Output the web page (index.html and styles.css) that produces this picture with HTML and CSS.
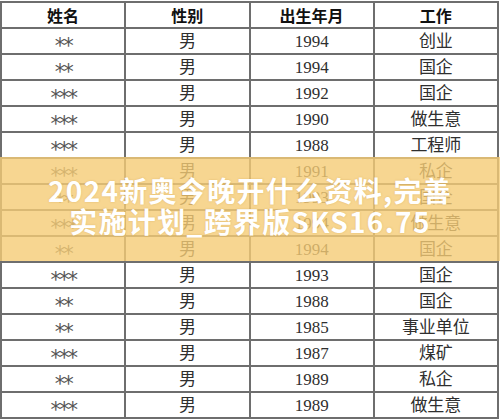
FILE: index.html
```html
<!DOCTYPE html>
<html lang="zh">
<head>
<meta charset="utf-8">
<link rel="stylesheet" href="styles.css">
</head>
<body>
<div class="page">
  <div class="sheet">
    <div class="cell head">姓名</div><div class="cell head">性别</div><div class="cell head">出生年月</div><div class="cell head">工作</div>
    <div class="cell name">**</div><div class="cell">男</div><div class="cell">1994</div><div class="cell">创业</div>
    <div class="cell name">**</div><div class="cell">男</div><div class="cell">1994</div><div class="cell">国企</div>
    <div class="cell name">***</div><div class="cell">男</div><div class="cell">1992</div><div class="cell">国企</div>
    <div class="cell name">***</div><div class="cell">男</div><div class="cell">1990</div><div class="cell">做生意</div>
    <div class="cell name">***</div><div class="cell">男</div><div class="cell">1988</div><div class="cell">工程师</div>
    <div class="cell name">***</div><div class="cell">男</div><div class="cell">1991</div><div class="cell">私企</div>
    <div class="cell name">**</div><div class="cell">男</div><div class="cell">1993</div><div class="cell">国企</div>
    <div class="cell name">***</div><div class="cell">男</div><div class="cell">1994</div><div class="cell">做生意</div>
    <div class="cell name">**</div><div class="cell">男</div><div class="cell">1994</div><div class="cell">国企</div>
    <div class="cell name">***</div><div class="cell">男</div><div class="cell">1993</div><div class="cell">国企</div>
    <div class="cell name">**</div><div class="cell">男</div><div class="cell">1988</div><div class="cell">国企</div>
    <div class="cell name">**</div><div class="cell">男</div><div class="cell">1985</div><div class="cell">事业单位</div>
    <div class="cell name">***</div><div class="cell">男</div><div class="cell">1987</div><div class="cell">煤矿</div>
    <div class="cell name">**</div><div class="cell">男</div><div class="cell">1989</div><div class="cell">私企</div>
    <div class="cell name">***</div><div class="cell">男</div><div class="cell">1989</div><div class="cell">做生意</div>
  </div>
  <div class="banner">
    <p class="title">2024新奥今晚开什么资料,完善<br>实施计划_跨界版SKS16.75</p>
  </div>
</div>
</body>
</html>
```

FILE: styles.css
```css
html, body {
  margin: 0;
  padding: 0;
  background: #ffffff;
}
.page {
  position: relative;
  width: 500px;
  height: 420px;
  overflow: hidden;
}
.sheet {
  display: grid;
  grid-template-columns: repeat(4, 1fr);
  grid-auto-rows: 24px;
  gap: 2px;
  padding: 2px;
  margin-top: 1px;
  width: 499px;
  box-sizing: border-box;
  background: #6e6e6e;
}
.cell {
  background: #ffffff;
  display: flex;
  align-items: center;
  justify-content: center;
  font-family: "Liberation Serif", "Noto Sans CJK SC", serif;
  font-size: 17px;
  color: #2f2f2f;
  line-height: 1;
}
.cell.head {
  font-family: "Noto Sans CJK SC", sans-serif;
  font-weight: 700;
  font-size: 16px;
  color: #111111;
}
.cell.name {
  padding-top: 10px;
  box-sizing: border-box;
  font-family: "DejaVu Sans", sans-serif;
  font-size: 21px;
  letter-spacing: -2px;
  color: #555555;
}
.banner {
  position: absolute;
  left: 0;
  top: 157px;
  width: 500px;
  height: 104px;
  background: rgba(245, 204, 118, 0.8);
  display: flex;
  align-items: center;
  justify-content: center;
}
.title {
  margin: 0 0 6px 0;
  text-align: center;
  font-family: "Noto Sans CJK SC", sans-serif;
  font-weight: 700;
  font-size: 28px;
  line-height: 31px;
  letter-spacing: 1.3px;
  color: #ffffff;
  text-shadow: 0 0 2px rgba(180, 130, 40, 0.35);
}
```
